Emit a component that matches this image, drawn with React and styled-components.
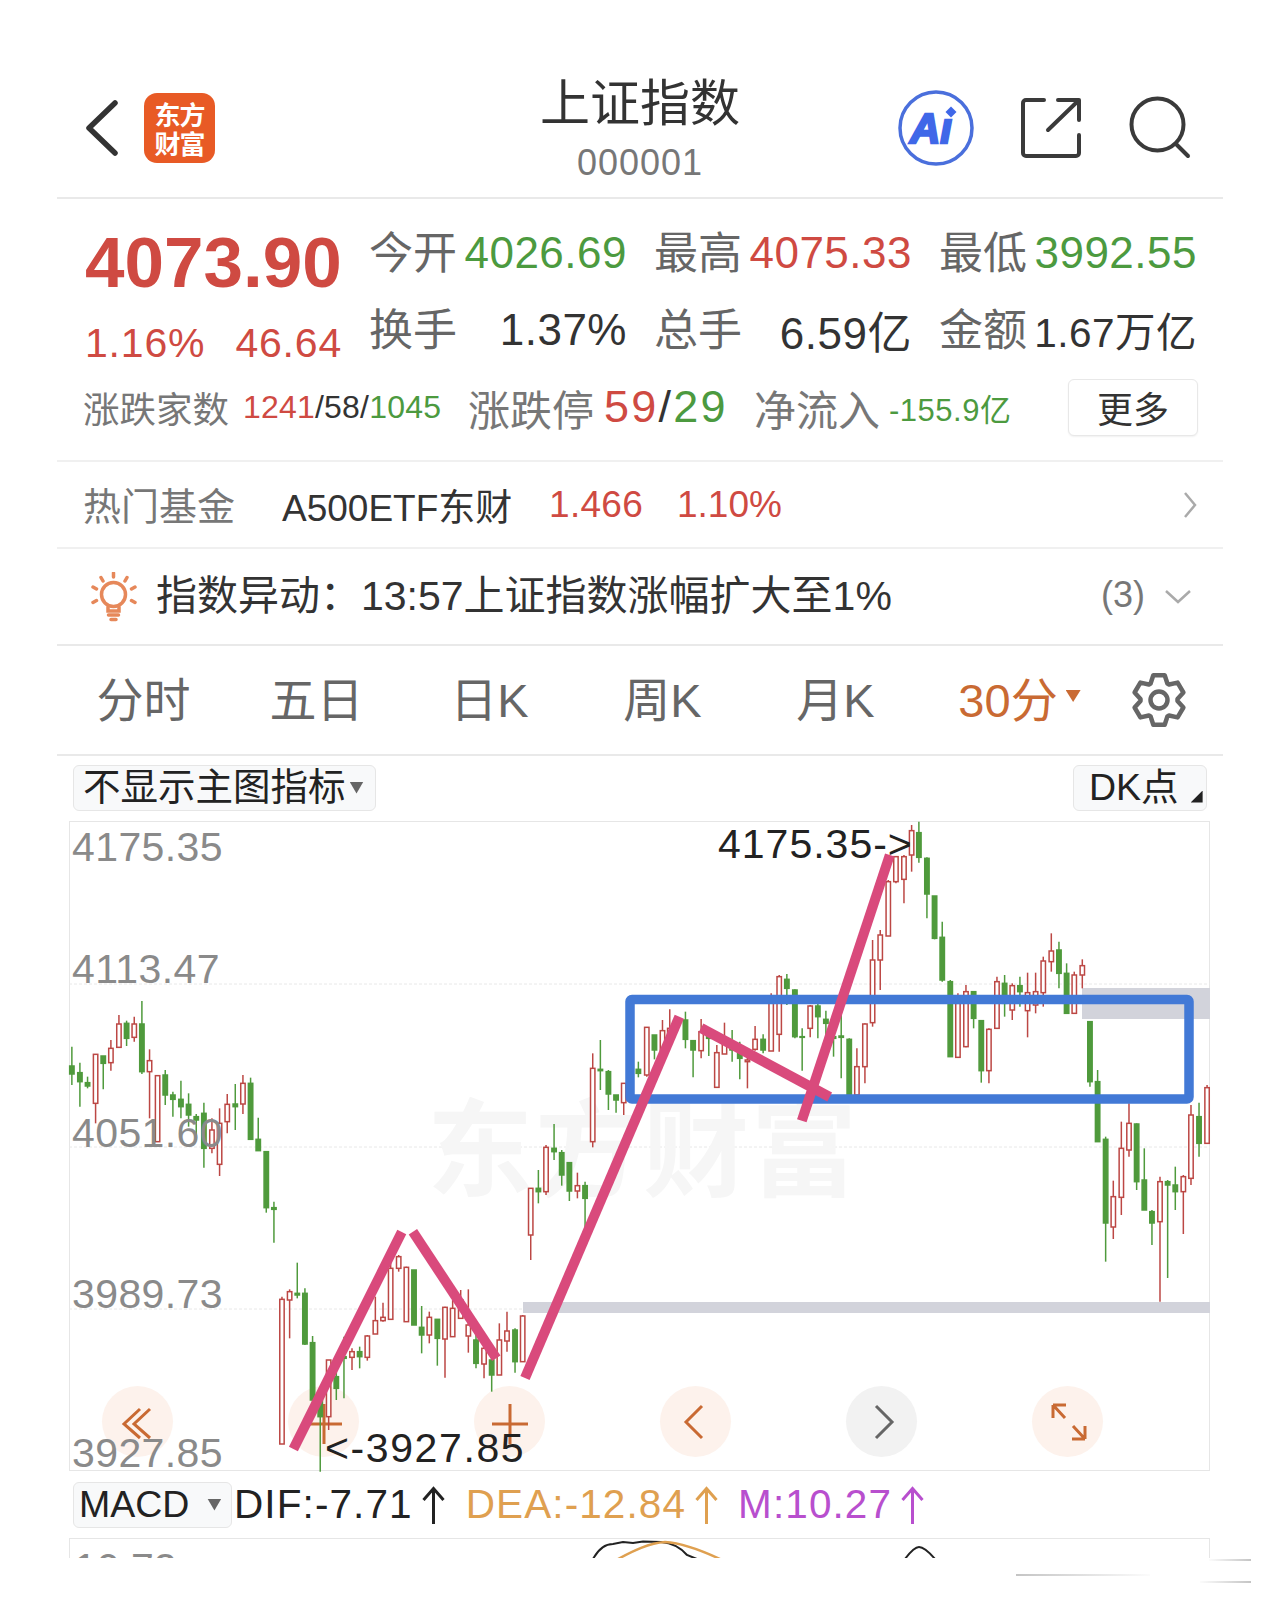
import styled, { createGlobalStyle } from "styled-components";

const GlobalStyle = createGlobalStyle`
  html, body {
    margin: 0;
    background: #fff;
  }
  * {
    box-sizing: border-box;
  }
`;

const FONT = `"Liberation Sans", "Noto Sans CJK SC", sans-serif`;
const RED = "#cf4a42";
const GREEN = "#4c9a3f";
const ORANGE = "#c96a33";

const Page = styled.div`
  width: 1280px;
  height: 1615px;
  padding: 0 57px;
  overflow: hidden;
  background: #fff;
  font-family: ${FONT};
  color: #333;
`;

const Header = styled.header`
  height: 199px;
  padding-top: 74px;
  display: grid;
  grid-template-columns: 1fr auto 1fr;
  align-items: start;
  border-bottom: 2px solid #e9e9e9;
`;

const HeaderLeft = styled.div`
  display: flex;
  align-items: center;
  gap: 25px;
  margin-top: 19px;
  padding-left: 28px;
`;

const Logo = styled.div`
  width: 71px;
  height: 70px;
  border-radius: 13px;
  background: #e85a25;
  color: #fff;
  font-family: "Noto Sans CJK SC", sans-serif;
  font-weight: 700;
  font-size: 26px;
  line-height: 29px;
  letter-spacing: -1px;
  text-align: center;
  padding-top: 6px;
`;

const TitleBlock = styled.div`
  text-align: center;
`;

const Title = styled.h1`
  margin: 0;
  font-size: 50px;
  line-height: 60px;
  font-weight: 400;
  color: #333;
`;

const Code = styled.div`
  margin-top: 7px;
  font-size: 36px;
  line-height: 44px;
  letter-spacing: 1px;
  color: #777;
`;

const HeaderRight = styled.div`
  display: flex;
  justify-content: flex-end;
  align-items: center;
  gap: 47px;
  margin-top: 16px;
  padding-right: 31px;
`;

const Quote = styled.section`
  height: 263px;
  padding-top: 15px;
  border-bottom: 2px solid #f0f0f0;
`;

const QuoteTop = styled.div`
  display: flex;
  padding-left: 28px;
`;

const PriceCol = styled.div`
  width: 284px;
`;

const Price = styled.div`
  width: 257px;
  font-size: 71px;
  line-height: 98px;
  font-weight: 700;
  color: ${RED};
  white-space: nowrap;
`;

const Change = styled.div`
  width: 257px;
  display: flex;
  justify-content: space-between;
  font-size: 41px;
  line-height: 62px;
  letter-spacing: 0.8px;
  color: ${RED};
`;

const StatGrid = styled.div`
  display: grid;
  grid-template-columns: repeat(3, 258px);
  grid-auto-rows: 77px;
  column-gap: 27px;
`;

const Stat = styled.div`
  display: flex;
  justify-content: space-between;
  align-items: center;
  white-space: nowrap;
`;

const StatLabel = styled.span`
  margin-bottom: 5px;
  font-size: 44px;
  color: #666;
`;

const StatValue = styled.span`
  font-size: ${({ $size }) => $size || 44}px;
  letter-spacing: 0.5px;
  color: ${({ $color }) => $color || "#333"};
`;

const Breadth = styled.div`
  display: grid;
  grid-template-columns: 385px 286px 314px 130px;
  align-items: center;
  height: 66px;
  padding-left: 26px;
`;

const BreadthCell = styled.div`
  display: flex;
  align-items: center;
  white-space: nowrap;
`;

const BreadthLabel = styled.span`
  font-size: ${({ $size }) => $size}px;
  color: #777;
`;

const BreadthValue = styled.span`
  margin-left: ${({ $gap }) => $gap}px;
  font-size: ${({ $size }) => $size}px;
  letter-spacing: ${({ $spacing }) => $spacing || 0}px;
  color: #333;
`;

const Tint = styled.span`
  color: ${({ $color }) => $color};
`;

const MoreButton = styled.button`
  height: 57px;
  padding: 0;
  border: 1px solid #e8e8e8;
  border-radius: 6px;
  background: #fff;
  box-shadow: 0 1px 2px rgba(0, 0, 0, 0.06);
  font-family: ${FONT};
  font-size: 36px;
  color: #333;
`;

const FundRow = styled.div`
  height: 87px;
  display: flex;
  align-items: center;
  padding: 0 26px;
  border-bottom: 2px solid #f0f0f0;
  white-space: nowrap;
`;

const FundLabel = styled.span`
  width: 199px;
  margin-bottom: 2px;
  font-size: 38px;
  color: #777;
`;

const FundName = styled.span`
  width: 267px;
  font-size: 37px;
  color: #333;
`;

const FundPrice = styled.span`
  width: 128px;
  font-size: 37px;
  letter-spacing: 0.3px;
  color: ${RED};
`;

const FundChange = styled.span`
  font-size: 37px;
  color: ${RED};
`;

const RowEnd = styled.div`
  margin-left: auto;
  display: flex;
  align-items: center;
  gap: 19px;
`;

const AlertRow = styled.div`
  height: 97px;
  display: flex;
  align-items: center;
  gap: 17px;
  padding: 0 31px 0 33px;
  border-bottom: 2px solid #e9e9e9;
  white-space: nowrap;
`;

const AlertText = styled.span`
  margin-bottom: 10px;
  font-size: 41px;
  color: #333;
`;

const AlertCount = styled.span`
  margin-bottom: 4px;
  font-size: 36px;
  color: #777;
`;

const Tabs = styled.nav`
  height: 110px;
  display: flex;
  align-items: center;
  border-bottom: 2px solid #e9e9e9;
`;

const Tab = styled.div`
  width: ${({ $wide }) => ($wide ? 195 : 173)}px;
  display: flex;
  justify-content: center;
  align-items: center;
  gap: 8px;
  margin-bottom: 8px;
  font-size: 47px;
  color: ${({ $active }) => ($active ? ORANGE : "#666")};
  white-space: nowrap;
`;

const GearWrap = styled.div`
  display: flex;
  margin-left: 14px;
`;

const Caret = styled.span`
  width: ${({ $w }) => $w}px;
  height: ${({ $h }) => $h}px;
  flex: none;
  background: ${({ $color }) => $color};
  clip-path: polygon(0 0, 100% 0, 50% 100%);
`;

const IndicatorRow = styled.div`
  height: 65px;
  display: flex;
  justify-content: space-between;
  align-items: center;
  padding: 0 16px 2px;
`;

const Pill = styled.div`
  height: 46px;
  width: ${({ $w }) => $w}px;
  display: flex;
  align-items: center;
  gap: ${({ $gap }) => $gap || 0}px;
  padding-left: ${({ $pad }) => $pad}px;
  background: #f8f9fa;
  border: 1px solid #e6e6e6;
  border-radius: 6px;
  font-size: 37.5px;
  color: #222;
  white-space: nowrap;
`;

const PillLabel = styled.span`
  margin-bottom: 8px;
`;

const CornerMark = styled.span`
  width: 12px;
  height: 12px;
  margin: 18px 0 0 12px;
  background: #222;
  clip-path: polygon(100% 0, 100% 100%, 0 100%);
`;

const ChartBox = styled.div`
  position: relative;
  height: 650px;
  margin: 0 13px 0 12px;
  border: 1.5px solid #e6e6e6;
`;

const ChartSvg = styled.svg`
  position: absolute;
  inset: -1.5px;
  display: block;
  overflow: visible;
  font-family: ${FONT};
`;

const ChartControls = styled.div`
  position: absolute;
  top: 564px;
  left: 32px;
  display: flex;
  gap: 115px;
`;

const ControlButton = styled.div`
  width: 71px;
  height: 71px;
  border-radius: 50%;
  display: flex;
  justify-content: center;
  align-items: center;
  background: ${({ $muted }) => ($muted ? "#f2f2f2" : "#fdf2ec")};
  color: ${({ $muted }) => ($muted ? "#666" : ORANGE)};
`;

const MacdRow = styled.div`
  height: 67px;
  display: flex;
  align-items: center;
  padding-left: 16px;
  white-space: nowrap;
`;

const MacdValue = styled.span`
  display: flex;
  align-items: center;
  gap: 9px;
  margin-left: ${({ $gap }) => $gap}px;
  font-size: 40.5px;
  letter-spacing: 1.1px;
  color: ${({ $color }) => $color};
`;

const MacdChart = styled.div`
  height: 20px;
  margin: 0 13px 0 12px;
  border: 1.5px solid #e6e6e6;
  border-bottom: 0;
  overflow: hidden;
`;

const MacdSvg = styled.svg`
  display: block;
  font-family: ${FONT};
`;

const Smudge = styled.div`
  width: ${({ $w }) => $w}px;
  height: 2px;
  margin: ${({ $top }) => $top}px 0 0 ${({ $left }) => $left}px;
  background: linear-gradient(
    ${({ $flip }) => ($flip ? "to left" : "to right")},
    rgba(190, 190, 190, 0.9),
    rgba(190, 190, 190, 0.05)
  );
`;

// stats strip
const stats = [
  ["今开", "4026.69", GREEN],
  ["最高", "4075.33", RED],
  ["最低", "3992.55", GREEN],
  ["换手", "1.37%"],
  ["总手", "6.59亿"],
  ["金额", "1.67万亿", "#333", 40.5],
];

const tabs = ["分时", "五日", "日K", "周K", "月K"];

// candles read off the reference crops: [x, "r"|"g", high, bodyTop, bodyBottom, low]
// crop units are 2.613 per px across and 3 per px down
const leftCandles = [
  [31, "g", 680, 738, 762, 795], [52, "g", 728, 758, 785, 860], [72, "g", 770, 788, 798, 805],
  [93, "r", 703, 703, 850, 910], [113, "g", 708, 708, 730, 808], [133, "r", 660, 685, 728, 752],
  [154, "r", 585, 612, 682, 682], [174, "g", 602, 610, 655, 678], [194, "r", 590, 612, 652, 665],
  [214, "g", 543, 612, 755, 762], [234, "r", 688, 722, 755, 895], [255, "r", 767, 767, 965, 965],
  [275, "g", 750, 765, 825, 855], [295, "g", 815, 825, 838, 890], [316, "g", 782, 838, 860, 895],
  [336, "g", 820, 853, 885, 920], [356, "g", 882, 890, 900, 960], [376, "g", 848, 880, 985, 1043],
  [397, "r", 895, 930, 985, 1000], [417, "r", 865, 910, 1033, 1068], [437, "r", 822, 853, 905, 940],
  [458, "g", 792, 852, 860, 930], [478, "r", 765, 790, 852, 882], [498, "g", 773, 790, 958, 958],
  [518, "g", 893, 958, 992, 992], [539, "g", 995, 995, 1163, 1178], [559, "g", 1145, 1163, 1168, 1268],
  [1230, "r", 1105, 1105, 1245, 1320], [1250, "g", 1050, 1105, 1115, 1150], [1270, "r", 975, 982, 1115, 1125],
  [1291, "g", 912, 985, 995, 1020], [1311, "g", 990, 998, 1065, 1097], [1331, "g", 1028, 1028, 1113, 1143],
  [1352, "r", 1058, 1097, 1113, 1135], [1372, "g", 1085, 1097, 1135, 1260], [1392, "r", 700, 745, 965, 982],
  [1412, "g", 660, 748, 752, 810], [1433, "g", 750, 755, 822, 870], [1453, "g", 825, 825, 840, 878],
  [1473, "r", 790, 790, 848, 885],
];

const lowCandles = [
  [580, "r", 290, 298, 732, 732], [600, "r", 268, 275, 300, 415], [620, "g", 188, 280, 285, 295],
  [640, "g", 265, 280, 432, 435], [660, "g", 408, 428, 600, 640], [680, "g", 580, 600, 650, 815],
  [702, "r", 480, 480, 650, 690], [722, "g", 510, 530, 565, 600], [742, "g", 410, 470, 475, 595],
  [763, "r", 445, 455, 472, 510], [783, "g", 440, 455, 470, 505], [803, "r", 405, 408, 472, 482],
  [824, "r", 290, 362, 402, 402], [844, "r", 308, 352, 362, 365], [864, "r", 170, 205, 358, 358],
  [885, "r", 165, 170, 205, 215], [905, "r", 200, 202, 365, 365], [925, "g", 210, 210, 375, 375],
  [945, "g", 318, 382, 405, 460], [965, "r", 335, 352, 405, 430], [986, "g", 358, 358, 415, 497],
  [1006, "r", 320, 322, 417, 533], [1026, "r", 300, 325, 410, 410], [1047, "r", 270, 300, 355, 355],
  [1067, "r", 268, 375, 408, 458], [1087, "g", 400, 420, 490, 505], [1108, "r", 440, 445, 492, 535],
  [1128, "g", 470, 480, 525, 575], [1148, "r", 370, 420, 525, 525], [1168, "r", 335, 393, 423, 455],
  [1189, "g", 385, 390, 485, 518], [1209, "r", 345, 348, 485, 485],
];

const rightCandles = [
  [48, "g", 725, 748, 760, 772], [70, "r", 622, 622, 765, 770], [90, "g", 645, 645, 690, 718],
  [111, "r", 600, 632, 690, 690], [130, "r", 568, 625, 660, 660], [171, "g", 575, 600, 658, 685],
  [191, "g", 660, 662, 690, 772], [212, "r", 597, 635, 692, 715], [232, "g", 640, 650, 655, 708],
  [253, "r", 675, 698, 802, 802], [273, "r", 608, 655, 702, 702], [293, "g", 630, 680, 690, 725],
  [313, "g", 665, 700, 715, 778], [333, "r", 700, 720, 725, 805], [353, "r", 618, 658, 688, 692],
  [374, "g", 643, 658, 690, 700], [395, "r", 520, 548, 693, 693], [416, "r", 465, 470, 643, 695],
  [436, "g", 462, 478, 505, 555], [457, "g", 508, 510, 650, 655], [476, "g", 625, 650, 652, 752],
  [497, "r", 555, 558, 625, 652], [517, "g", 550, 558, 590, 655], [538, "g", 572, 598, 610, 645],
  [558, "g", 620, 650, 655, 710], [578, "g", 565, 648, 652, 775], [599, "g", 655, 658, 825, 825],
  [619, "r", 685, 740, 825, 825], [640, "r", 610, 612, 740, 790], [660, "r", 360, 420, 608, 620],
  [680, "r", 330, 345, 420, 510], [701, "r", 180, 185, 348, 348], [721, "r", 110, 110, 185, 190],
  [742, "r", 105, 110, 178, 250], [762, "r", 15, 32, 105, 155], [781, "g", 5, 38, 112, 128],
  [802, "g", 112, 115, 222, 295], [822, "g", 228, 228, 355, 358], [842, "g", 305, 352, 480, 485],
  [863, "g", 480, 485, 710, 710], [883, "r", 520, 550, 712, 712], [904, "r", 495, 515, 680, 682],
  [924, "g", 515, 515, 595, 625], [944, "g", 602, 602, 752, 788], [964, "r", 625, 628, 752, 790],
  [985, "r", 470, 485, 625, 625], [1005, "g", 465, 490, 550, 590], [1025, "r", 490, 497, 570, 600],
  [1045, "g", 470, 497, 515, 560], [1065, "r", 458, 518, 572, 652], [1086, "r", 458, 515, 555, 580],
  [1106, "r", 410, 423, 518, 560], [1127, "r", 340, 393, 425, 455], [1147, "g", 365, 390, 460, 505],
  [1167, "g", 430, 460, 580, 580], [1187, "r", 455, 465, 580, 580], [1208, "r", 418, 437, 465, 505],
  [1228, "g", 605, 605, 785, 800], [1248, "g", 750, 785, 965, 965], [1269, "g", 950, 958, 1209, 1325],
  [1289, "r", 1082, 1130, 1221, 1257], [1310, "r", 905, 985, 1132, 1185], [1330, "r", 850, 910, 990, 1010],
  [1350, "g", 910, 912, 1085, 1110], [1370, "g", 985, 1080, 1170, 1170], [1390, "g", 1170, 1175, 1209, 1275],
  [1411, "r", 1070, 1085, 1205, 1445], [1431, "g", 1080, 1085, 1095, 1374], [1451, "g", 1040, 1095, 1115, 1170],
  [1472, "r", 1065, 1070, 1115, 1242], [1492, "r", 855, 885, 1075, 1095], [1513, "g", 848, 890, 970, 1010],
  [1534, "r", 795, 803, 970, 970],
];

const Candles = ({ rows, x0, y0 }) =>
  rows.map(([zx, kind, high, top, bottom, low]) => {
    const x = x0 + zx / 2.613;
    const y = (v) => y0 + v / 3;
    const up = kind === "r";
    const color = up ? "#bc4744" : "#4f9a3c";
    return (
      <g key={zx} stroke={color} strokeWidth="1.5">
        <line x1={x} x2={x} y1={y(high)} y2={y(top)} />
        <line x1={x} x2={x} y1={y(bottom)} y2={y(low)} />
        <rect
          x={x - 2.2}
          y={y(top)}
          width="4.4"
          height={y(bottom) - y(top)}
          fill={up ? "#fff" : color}
        />
      </g>
    );
  });

const AXIS_LABELS = [
  ["4175.35", 861],
  ["4113.47", 983],
  ["4051.60", 1147],
  ["3989.73", 1308],
  ["3927.85", 1467],
];

const PINK_LINES = [
  [293.4, 1449, 401.8, 1232],
  [412.9, 1231.7, 496.3, 1358.3],
  [525, 1378, 679.3, 1016.7],
  [701, 1028, 829.7, 1097],
  [801.8, 1120.7, 889.8, 855],
];

const KLineChart = () => (
  <ChartSvg width="1141" height="650" viewBox="69 821 1141 650">
    {[984, 1147, 1309].map((y) => (
      <line key={y} x1="69" x2="1210" y1={y} y2={y} stroke="#e8e8e8" strokeWidth="1" strokeDasharray="3 2" />
    ))}
    <text x="427" y="1188" fontSize="106" fontWeight="700" letterSpacing="2" fill="#f6f6f6" fontFamily="Noto Sans CJK SC">
      东方财富
    </text>
    <rect x="1082" y="988" width="128" height="31" fill="#d2d3db" />
    <rect x="523" y="1302" width="687" height="11" fill="#d2d3db" />
    <Candles rows={leftCandles} x0={60} y0={820} />
    <Candles rows={lowCandles} x0={60} y0={1200} />
    <Candles rows={rightCandles} x0={620} y0={820} />
    <rect x="630" y="999.5" width="559" height="99.5" rx="2" fill="none" stroke="#4279d6" strokeWidth="9.5" />
    {PINK_LINES.map(([x1, y1, x2, y2]) => (
      <line key={x1} x1={x1} y1={y1} x2={x2} y2={y2} stroke="#d94a7c" strokeWidth="10" />
    ))}
    {AXIS_LABELS.map(([label, y]) => (
      <text key={label} x="72" y={y} fontSize="41" letterSpacing="0.4" fill="#8a8a8a">
        {label}
      </text>
    ))}
    <text x="718" y="858" fontSize="41" letterSpacing="1" fill="#222">
      4175.35-&gt;
    </text>
    <text x="325" y="1462" fontSize="41" letterSpacing="1.6" fill="#222">
      &lt;-3927.85
    </text>
  </ChartSvg>
);

const gearPath = (() => {
  const point = (r, deg) => {
    const a = (deg * Math.PI) / 180;
    return `${(28 + r * Math.cos(a)).toFixed(1)} ${(28 + r * Math.sin(a)).toFixed(1)}`;
  };
  let d = "";
  for (let i = 0; i < 6; i++) {
    const c = -90 + i * 60;
    d += `${i ? "L" : "M"}${point(18.5, c - 27)}L${point(25.5, c - 13)}L${point(25.5, c + 13)}L${point(18.5, c + 27)}`;
  }
  return d + "Z";
})();

const ArrowUp = ({ color }) => (
  <svg width="23" height="38" viewBox="0 0 23 38" fill="none" stroke={color} strokeWidth="3">
    <path d="M11.5 2V38M1.5 14L11.5 2.5L21.5 14" />
  </svg>
);

const ControlIcon = ({ d }) => (
  <svg width="44" height="44" viewBox="0 0 44 44" fill="none" stroke="currentColor" strokeWidth="3">
    <path d={d} />
  </svg>
);

const App = () => (
  <>
    <GlobalStyle />
    <Page>
      <Header>
        <HeaderLeft>
          <svg width="34" height="56" viewBox="0 0 34 56" fill="none" stroke="#333" strokeWidth="5.5" strokeLinecap="round" strokeLinejoin="round">
            <path d="M30 3L4 28L30 53" />
          </svg>
          <Logo>
            东方
            <br />
            财富
          </Logo>
        </HeaderLeft>
        <TitleBlock>
          <Title>上证指数</Title>
          <Code>000001</Code>
        </TitleBlock>
        <HeaderRight>
          <svg width="76" height="76" viewBox="0 0 76 76">
            <circle cx="38" cy="38" r="36" fill="none" stroke="#4a6fdc" strokeWidth="3.5" />
            <text x="12" y="53" fontFamily="Liberation Sans" fontWeight="700" fontStyle="italic" fontSize="42" fill="#3f67e8" stroke="#3f67e8" strokeWidth="2.4">
              Aı
            </text>
            <path d="M53 16.5L58.5 22L53 27.5L47.5 22Z" fill="#3f67e8" />
          </svg>
          <svg width="60" height="60" viewBox="0 0 60 60" fill="none" stroke="#3a3a3a" strokeWidth="4" strokeLinecap="round" strokeLinejoin="round">
            <path d="M23 2H5a3 3 0 0 0-3 3V55a3 3 0 0 0 3 3H55a3 3 0 0 0 3-3V37" />
            <path d="M37 2H58V22M57 3L27 32" />
          </svg>
          <svg width="64" height="64" viewBox="0 0 64 64" fill="none" stroke="#3a3a3a" strokeWidth="4" strokeLinecap="round">
            <circle cx="29.5" cy="28.5" r="26" />
            <path d="M48 48L60 60" />
          </svg>
        </HeaderRight>
      </Header>

      <Quote>
        <QuoteTop>
          <PriceCol>
            <Price>4073.90</Price>
            <Change>
              <span>1.16%</span>
              <span>46.64</span>
            </Change>
          </PriceCol>
          <StatGrid>
            {stats.map(([label, value, color, size]) => (
              <Stat key={label}>
                <StatLabel>{label}</StatLabel>
                <StatValue $color={color} $size={size}>
                  {value}
                </StatValue>
              </Stat>
            ))}
          </StatGrid>
        </QuoteTop>
        <Breadth>
          <BreadthCell>
            <BreadthLabel $size={36.5}>涨跌家数</BreadthLabel>
            <BreadthValue $gap={14} $size={32} $spacing={0.2}>
              <Tint $color={RED}>1241</Tint>/58/<Tint $color={GREEN}>1045</Tint>
            </BreadthValue>
          </BreadthCell>
          <BreadthCell>
            <BreadthLabel $size={42}>涨跌停</BreadthLabel>
            <BreadthValue $gap={10} $size={45} $spacing={2.2}>
              <Tint $color={RED}>59</Tint>/<Tint $color={GREEN}>29</Tint>
            </BreadthValue>
          </BreadthCell>
          <BreadthCell>
            <BreadthLabel $size={42}>净流入</BreadthLabel>
            <BreadthValue $gap={9} $size={31} $spacing={0.5}>
              <Tint $color={GREEN}>-155.9亿</Tint>
            </BreadthValue>
          </BreadthCell>
          <MoreButton>更多</MoreButton>
        </Breadth>
      </Quote>

      <FundRow>
        <FundLabel>热门基金</FundLabel>
        <FundName>A500ETF东财</FundName>
        <FundPrice>1.466</FundPrice>
        <FundChange>1.10%</FundChange>
        <RowEnd>
          <svg width="14" height="28" viewBox="0 0 14 28" fill="none" stroke="#aaa" strokeWidth="2.5">
            <path d="M2 2L12 14L2 26" />
          </svg>
        </RowEnd>
      </FundRow>

      <AlertRow>
        <svg width="49" height="50" viewBox="0 0 49 50" fill="none" stroke="#e6885a" strokeWidth="3.5" strokeLinecap="round">
          <circle cx="23.5" cy="22.5" r="12" />
          <path d="M23.5 1V5M11 5.5L13 9M37 5.5L35 9M3 15L6.5 17M45 15L41.5 17M3 30.5L6.5 28.5M45 30.5L41.5 28.5" />
          <path d="M18 35V39H29V35M18.5 43H28.5M21 47.5H26" />
        </svg>
        <AlertText>指数异动：13:57上证指数涨幅扩大至1%</AlertText>
        <RowEnd>
          <AlertCount>(3)</AlertCount>
          <svg width="28" height="16" viewBox="0 0 28 16" fill="none" stroke="#aaa" strokeWidth="2.5">
            <path d="M2 2L14 13L26 2" />
          </svg>
        </RowEnd>
      </AlertRow>

      <Tabs>
        {tabs.map((tab) => (
          <Tab key={tab}>{tab}</Tab>
        ))}
        <Tab $wide $active>
          30分
          <Caret $w={15} $h={12} $color={ORANGE} />
        </Tab>
        <GearWrap>
          <svg width="56" height="56" viewBox="0 0 56 56" fill="none" stroke="#666" strokeWidth="4.5" strokeLinejoin="round">
            <path d={gearPath} />
            <circle cx="28" cy="28" r="8.5" />
          </svg>
        </GearWrap>
      </Tabs>

      <IndicatorRow>
        <Pill $w={303} $pad={9} $gap={4}>
          <PillLabel>不显示主图指标</PillLabel>
          <Caret $w={14} $h={12} $color="#666" />
        </Pill>
        <Pill $w={134} $pad={15}>
          <PillLabel>DK点</PillLabel>
          <CornerMark />
        </Pill>
      </IndicatorRow>

      <ChartBox>
        <ChartControls>
          <ControlButton>
            <ControlIcon d="M24 9L8 24L24 38M34 9L18 24L34 38" />
          </ControlButton>
          <ControlButton>
            <ControlIcon d="M22 4V44M4 24H40" />
          </ControlButton>
          <ControlButton>
            <ControlIcon d="M22 4V44M4 24H40" />
          </ControlButton>
          <ControlButton>
            <ControlIcon d="M28 6L12 22L28 38" />
          </ControlButton>
          <ControlButton $muted>
            <ControlIcon d="M16 6L32 22L16 38" />
          </ControlButton>
          <ControlButton>
            <ControlIcon d="M7 5V18M7 5H20M7 5L19 18M39 39V26M39 39H26M39 39L27 26" />
          </ControlButton>
        </ChartControls>
        <KLineChart />
      </ChartBox>

      <MacdRow>
        <Pill $w={159} $pad={5} $gap={18}>
          MACD
          <Caret $w={14} $h={12} $color="#666" />
        </Pill>
        <MacdValue $gap={2} $color="#222">
          DIF:-7.71
          <ArrowUp color="#222" />
        </MacdValue>
        <MacdValue $gap={21} $color="#dfa050">
          DEA:-12.84
          <ArrowUp color="#dfa050" />
        </MacdValue>
        <MacdValue $gap={20} $color="#b84fce">
          M:10.27
          <ArrowUp color="#b84fce" />
        </MacdValue>
      </MacdRow>

      <MacdChart>
        <MacdSvg width="1141" height="20" viewBox="69 1537 1141 20">
          <text x="73" y="1580" fontSize="41" fill="#8a8a8a">
            10.72
          </text>
          <path d="M592 1557C598 1546 604 1542 612 1542L622 1540L632 1541L642 1539.5L660 1540C672 1541 680 1546 686 1553L696 1557" fill="none" stroke="#222" strokeWidth="2" />
          <path d="M617 1557C632 1549 648 1541 664 1540C682 1541 702 1549 721 1558" fill="none" stroke="#dfa050" strokeWidth="2.5" />
          <path d="M904 1557C910 1549 914 1545 918 1545C923 1545 928 1550 934 1557" fill="none" stroke="#222" strokeWidth="2" />
        </MacdSvg>
      </MacdChart>

      <Smudge $w={42} $left={1152} $top={1} $flip />
      <Smudge $w={134} $left={959} $top={13} />
      <Smudge $w={51} $left={1143} $top={5} $flip />
    </Page>
  </>
);

export default App;
